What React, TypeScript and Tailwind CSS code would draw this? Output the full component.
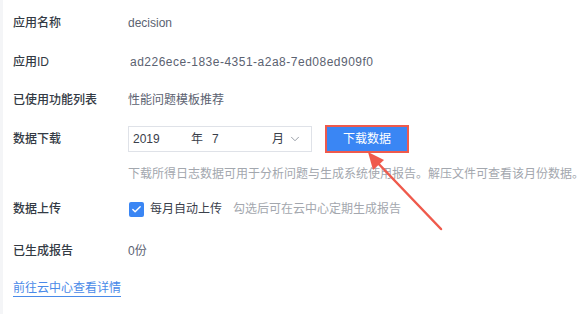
import { Check, ChevronDown } from "lucide-react";

const font = { fontFamily: '"Liberation Sans", "Noto Sans CJK SC", sans-serif' };

const Label = ({ text }: { text: string }) => (
  <div className="w-[115px] shrink-0 text-[12px] font-medium text-[#333a44]">{text}</div>
);

const App = () => {
  return (
    <div className="relative w-[586px] h-[314px] bg-white flex" style={font}>
      <div className="w-[3px] bg-[#f4f5f7]" />
      <div className="flex flex-col pl-[10px] text-[12px] text-[#5b6271]">
        <div className="flex items-center h-[20px] mt-[13px]">
          <Label text="应用名称" />
          <span>decision</span>
        </div>
        <div className="flex items-center h-[20px] mt-[19px]">
          <Label text="应用ID" />
          <span className="pl-[2px] tracking-[0.5px]">ad226ece-183e-4351-a2a8-7ed08ed909f0</span>
        </div>
        <div className="flex items-center h-[20px] mt-[18px]">
          <Label text="已使用功能列表" />
          <span>性能问题模板推荐</span>
        </div>
        <div className="flex items-center h-[28px] mt-[15px]">
          <Label text="数据下载" />
          <div className="flex items-center w-[184px] h-[26px] border border-[#dfe2e8] text-[#3a404b] pl-[4px]">
            <span className="w-[58px]">2019</span>
            <span className="w-[21px]">年</span>
            <span className="w-[60px]">7</span>
            <span className="w-[16px]">月</span>
            <ChevronDown size={14} strokeWidth={1.5} className="text-[#8a909a]" />
          </div>
          <button className="ml-[13px] w-[84px] h-[28px] border-2 border-[#ef5a4c] bg-[#3a86f4] text-white text-[12px]">
            下载数据
          </button>
        </div>
        <div className="flex items-center h-[20px] mt-[11px] pl-[115px] text-[#a3a7ae]">
          下载所得日志数据可用于分析问题与生成系统使用报告。解压文件可查看该月份数据。
        </div>
        <div className="flex items-center h-[20px] mt-[15px]">
          <Label text="数据上传" />
          <span className="flex items-center justify-center w-[15px] h-[15px] rounded-[2px] bg-[#3a86f4] ml-[1px] mr-[6px]">
            <Check size={11} strokeWidth={3} className="text-white" />
          </span>
          <span className="text-[#3a404b]">每月自动上传</span>
          <span className="ml-[11px] text-[#a3a7ae]">勾选后可在云中心定期生成报告</span>
        </div>
        <div className="flex items-center h-[20px] mt-[22px]">
          <Label text="已生成报告" />
          <span>0份</span>
        </div>
        <div className="flex items-center h-[20px] mt-[17px]">
          <a className="text-[#4a8ae8] border-b border-[#4a8ae8] leading-[16px]">前往云中心查看详情</a>
        </div>
      </div>
      <svg className="absolute left-0 top-0 pointer-events-none" width="586" height="314">
        <line x1="441" y1="229" x2="374" y2="159" stroke="#ef5a4c" strokeWidth="2.5" strokeLinecap="round" />
        <polygon points="368,152 384,160 373,170" fill="#ef5a4c" />
      </svg>
    </div>
  );
};

export default App;
